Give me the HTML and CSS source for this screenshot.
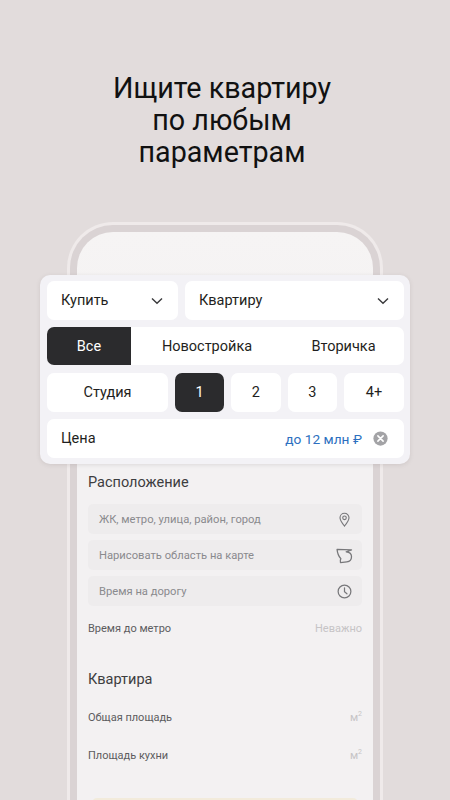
FILE: index.html
```
<!DOCTYPE html>
<html lang="ru">
<head>
<meta charset="utf-8">
<title>Поиск квартиры</title>
<link rel="stylesheet" href="styles.css">
</head>
<body>
<main class="page">
  <h1 class="title">Ищите квартиру<br>по любым<br>параметрам</h1>
  <div class="phone">
    <div class="phone-band">
      <div class="screen">
        <h2 class="section first">Расположение</h2>
        <div class="field"><span>ЖК, метро, улица, район, город</span>
          <svg class="ficon" viewBox="0 0 16 16" fill="none" stroke="#77777a" stroke-width="1.2"><path d="M8 15C5.4 11.8 3.2 9.2 3.2 6.2a4.8 4.8 0 0 1 9.6 0c0 3-2.2 5.6-4.8 8.8z"/><circle cx="8" cy="6.2" r="1.9"/></svg></div>
        <div class="field"><span>Нарисовать область на карте</span>
          <svg class="ficon wide" viewBox="0 0 16 16" fill="none" stroke="#77777a" stroke-width="1.2" stroke-linejoin="round"><path d="M1 2.2 14.6 2.8 9.6 4.6c3 .2 5 2 5 4.6 0 2.6-1.8 4.6-4.4 4.8l-6 .6c-.4-1.4-.2-2.6.4-3.6C2.8 9.2 1.4 6.6 1 2.2z"/></svg></div>
        <div class="field"><span>Время на дорогу</span>
          <svg class="ficon" viewBox="0 0 16 16" fill="none" stroke="#77777a" stroke-width="1.3" stroke-linecap="round"><circle cx="8" cy="8" r="6.8"/><path d="M8 4v4.2l2.6 2.2"/></svg></div>
        <div class="line metro"><span>Время до метро</span><span class="muted">Неважно</span></div>
        <h2 class="section second">Квартира</h2>
        <div class="line area"><span>Общая площадь</span><span class="muted">м<sup>2</sup></span></div>
        <div class="line area"><span>Площадь кухни</span><span class="muted">м<sup>2</sup></span></div>
        <div class="notice"></div>
      </div>
    </div>
    <section class="card">
      <div class="row">
        <div class="cell sel-a"><span>Купить</span><svg class="chev" viewBox="0 0 12 8" fill="none" stroke="#3a3a3c" stroke-width="1.4"><path d="M1 1.4 6 6.2l5-4.8"/></svg></div>
        <div class="cell sel-b"><span>Квартиру</span><svg class="chev" viewBox="0 0 12 8" fill="none" stroke="#3a3a3c" stroke-width="1.4"><path d="M1 1.4 6 6.2l5-4.8"/></svg></div>
      </div>
      <div class="tabs">
        <div class="tab tab-all">Все</div>
        <div class="tab tab-new">Новостройка</div>
        <div class="tab tab-old">Вторичка</div>
      </div>
      <div class="row rooms-row">
        <div class="cell rooms studio">Студия</div>
        <div class="cell rooms num active">1</div>
        <div class="cell rooms num">2</div>
        <div class="cell rooms num">3</div>
        <div class="cell rooms plus">4+</div>
      </div>
      <div class="cell price">
        <span class="price-label">Цена</span>
        <span class="price-value">до 12 млн ₽</span>
        <svg class="clear" viewBox="0 0 16 16"><circle cx="8" cy="8" r="7.6" fill="#a3a3a6"/><path d="M5.2 5.2l5.6 5.6M10.8 5.2l-5.6 5.6" stroke="#fff" stroke-width="1.7" stroke-linecap="round"/></svg>
      </div>
    </section>
  </div>
</main>
</body>
</html>
```
FILE: styles.css
```
* { box-sizing: border-box; }
html, body { margin: 0; height: 100%; }
body { font-family: Roboto, "Noto Sans", sans-serif; color: #1f1f21; background: #e2dcdc; }
.page { width: 450px; height: 800px; overflow: hidden; padding-top: 72px; }
.title { margin: 0; padding-right: 6px; text-align: center; font-size: 28.7px; line-height: 32px; font-weight: 400; color: #111; }
.phone { position: relative; margin: 54px 0 0 67px; width: 316px; height: 600px; padding: 3px 3px 0; background: #efeaea; border-radius: 46px 46px 0 0; }
.phone-band { height: 100%; padding: 7px 7px 0; background: #dad3d4; border-radius: 43px 43px 0 0; }
.screen { height: 100%; padding: 0 11px; border-radius: 36px 36px 0 0; background: linear-gradient(#f6f4f4, #f3f1f2 30%); color: #4a4a4c; }
.section { margin: 0; font-size: 14.5px; line-height: 20px; font-weight: 400; color: #3d3d3f; }
.first { padding-top: 241px; }
.field { display: flex; align-items: center; justify-content: space-between; height: 30px; margin-top: 6px; padding: 0 10px 0 11px; background: #eeeced; border-radius: 5px; font-size: 11.2px; color: #8a8a8d; }
.first + .field { margin-top: 11px; }
.ficon { width: 15px; height: 15px; }
.wide { width: 17px; height: 17px; margin-right: -1px; }
.line { display: flex; justify-content: space-between; font-size: 11px; line-height: 16px; color: #5c5c5e; }
.metro { margin-top: 15px; }
.muted { color: #c6c4c6; }
.muted sup { font-size: 7px; line-height: 0; }
.second { margin-top: 33px; }
.area { margin-top: 20px; }
.area + .area { margin-top: 22px; }
.notice { height: 30px; margin: 34px 4px 0; background: #f2ebdb; border-radius: 5px; }
.card { position: absolute; left: -27px; top: 53px; width: 370px; height: 189px; padding: 6px 6px 6px 7px; background: #f3f2f6; border-radius: 10px; box-shadow: 0 1px 4px rgba(120,110,110,.18); display: flex; flex-direction: column; gap: 7px; }
.row { display: flex; gap: 7px; height: 39px; }
.cell { display: flex; align-items: center; background: #fff; border-radius: 7px; font-size: 14.5px; color: #1f1f21; }
.sel-a { width: 131px; padding: 0 15px 0 14px; justify-content: space-between; }
.sel-b { flex: 1; padding: 0 15px 0 14px; justify-content: space-between; }
.chev { width: 12px; height: 8px; }
.tabs { display: flex; height: 38px; background: #fff; border-radius: 7px; font-size: 14.5px; }
.tab { display: flex; align-items: center; justify-content: center; }
.tab-all { width: 84px; background: #2b2b2d; color: #fff; border-radius: 7px 0 0 7px; }
.tab-new { width: 152px; }
.tab-old { width: 121px; }
.rooms-row { margin-top: 1px; }
.rooms { justify-content: center; }
.studio { width: 121px; }
.num { width: 49.3px; }
.active { background: #2b2b2d; color: #fff; }
.plus { flex: 1; }
.price { height: 39px; padding: 0 16px 0 14px; }
.price-label { flex: 1; }
.price-value { color: #2c6fc0; font-size: 13.7px; margin-right: 11px; }
.clear { width: 15px; height: 15px; }
```
